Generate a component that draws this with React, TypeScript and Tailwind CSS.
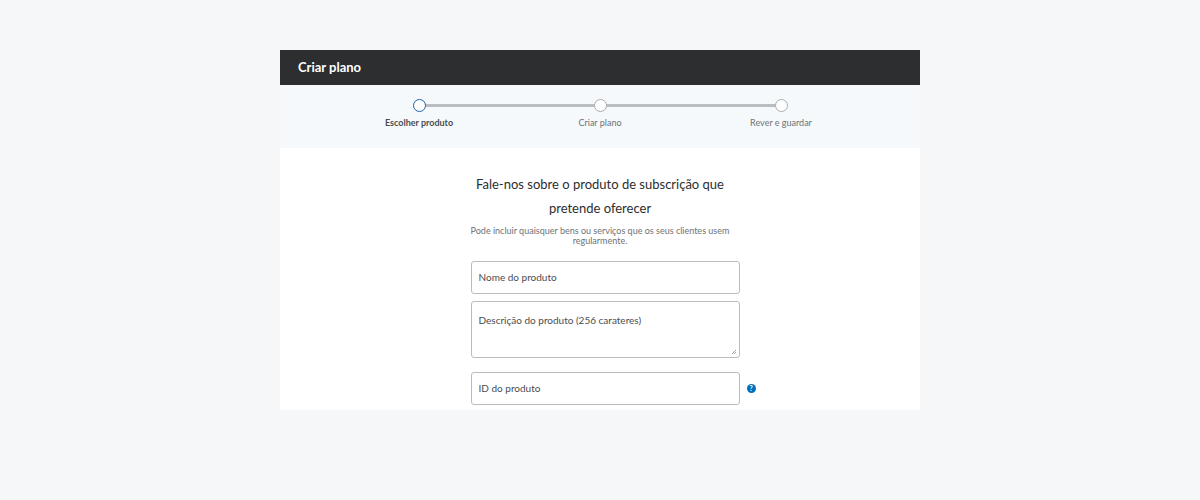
export default function App() {
  const steps = ['Escolher produto', 'Criar plano', 'Rever e guardar'];
  return (
    <div className="w-[1200px] h-[500px] bg-[#f6f7f9] pt-[50px]" style={{ fontFamily: 'Lato, "Noto Sans", sans-serif' }}>
      <div className="w-[640px] h-[360px] mx-auto bg-white flex flex-col">
        {/* Header */}
        <div className="h-[35px] bg-[#2c2e2f] flex items-center px-[18px]">
          <span className="text-white text-[13px] font-bold">Criar plano</span>
        </div>
        {/* Stepper */}
        <div className="h-[63px] bg-[#f5f9fc] relative">
          <div className="absolute left-[139px] w-[362px] top-[19px] h-[3px] bg-[#b9bdbf]" />
          {steps.map((s, i) => (
            <div key={s} className="absolute top-[14px] flex flex-col items-center w-[120px]" style={{ left: 79 + i * 181 }}>
              <div className={`w-[13px] h-[13px] rounded-full bg-white border ${i === 0 ? 'border-[#1d63a8] border-[1.5px]' : 'border-[#a9aeb1]'}`} />
              <span className={`mt-[4px] text-[9px] ${i === 0 ? 'text-[#4a4d50] font-bold' : 'text-[#6c7378]'}`}>{s}</span>
            </div>
          ))}
        </div>
        {/* Body */}
        <div className="flex flex-col items-center pt-[24px]">
          <h2 className="text-[13px] text-[#2c2e2f] leading-[24px] text-center w-[300px]">
            Fale-nos sobre o produto de subscrição que pretende oferecer
          </h2>
          <p className="mt-[6px] text-[9px] leading-[10px] text-[#6c7378] text-center w-[270px]">
            Pode incluir quaisquer bens ou serviços que os seus clientes usem regularmente.
          </p>
          <div className="mt-[15px] w-[269px] flex flex-col gap-[7px] relative left-[5px]">
            <div className="h-[33px] border border-[#b9bdbf] rounded-[3px] flex items-center px-[7px] text-[10px] text-[#4a4d50]">Nome do produto</div>
            <div className="h-[57px] border border-[#b9bdbf] rounded-[3px] px-[7px] pt-[11px] text-[10px] text-[#4a4d50] relative">
              Descrição do produto (256 carateres)
              <svg className="absolute right-[2px] bottom-[2px]" width="6" height="6" viewBox="0 0 6 6"><path d="M5 1 1 5M5 3 3 5" stroke="#888" strokeWidth="0.8" /></svg>
            </div>
            <div className="mt-[7px] h-[33px] border border-[#b9bdbf] rounded-[3px] flex items-center px-[7px] text-[10px] text-[#4a4d50] relative">
              ID do produto
              <div className="absolute right-[-17px] w-[9px] h-[9px] rounded-full bg-[#0070ba] text-white text-[7px] font-bold flex items-center justify-center leading-none">?</div>
            </div>
          </div>
        </div>
      </div>
    </div>
  );
}
